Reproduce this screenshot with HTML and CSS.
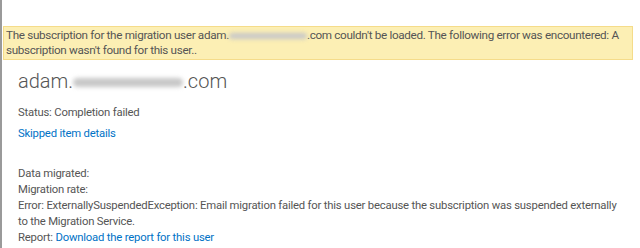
FILE: index.html
```html
<!DOCTYPE html>
<html lang="en">
  <head>
    <meta charset="UTF-8" />
    <title>Migration user details</title>
    <link rel="stylesheet" href="styles.css">
  </head>
  <body>
    <div class="page">
      <div class="notice">
        The subscription for the migration user adam.<span class="blur blur-small"></span>.com couldn't be loaded. The following error was encountered: A subscription wasn't found for this user..
      </div>
      <div class="details">
        <h1 class="user">adam.<span class="blur blur-large"></span>.com</h1>
        <p class="status">Status: Completion failed</p>
        <a class="link skipped" href="#">Skipped item details</a>
        <div class="stats">
          <div>Data migrated:</div>
          <div>Migration rate:</div>
          <div class="error">Error: ExternallySuspendedException: Email migration failed for this user because the subscription was suspended externally to the Migration Service.</div>
          <div>Report: <a class="link" href="#">Download the report for this user</a></div>
        </div>
      </div>
    </div>
  </body>
</html>
```

FILE: styles.css
```css
body {
  margin: 0;
  background-color: white;
  color: #444;
  font-family: Roboto, sans-serif;
  font-size: 11.3px;
  letter-spacing: -0.2px;
}
.page {
  height: 248px;
  padding-top: 26px;
  box-sizing: border-box;
  border-left: 2px solid #9a9a9a;
}
.notice {
  width: 630px;
  margin-left: 1px;
  padding: 1px 1px 1px 2px;
  box-sizing: border-box;
  background-color: #fcefb4;
  border: 1px solid #f5dc8a;
  color: #555;
  font-size: 11.7px;
  line-height: 15px;
  letter-spacing: -0.32px;
}
.details {
  padding-left: 16px;
}
.user {
  margin: 9px 0 0;
  font-size: 20px;
  font-weight: 300;
  line-height: 24px;
  letter-spacing: 0;
  color: #555;
}
.blur {
  display: inline-block;
  vertical-align: middle;
  background-color: #c8c8c8;
  border-radius: 6px;
  filter: blur(2px);
}
.blur-small {
  width: 78px;
  height: 6px;
}
.blur-large {
  width: 110px;
  height: 9px;
}
.status {
  margin: 12px 0 5px;
  line-height: 16px;
  color: #555;
}
.link {
  color: #0072c6;
  text-decoration: none;
}
.skipped {
  display: block;
  line-height: 16px;
}
.stats {
  margin-top: 24px;
  line-height: 16px;
  color: #555;
}
.error {
  max-width: 610px;
}
```
